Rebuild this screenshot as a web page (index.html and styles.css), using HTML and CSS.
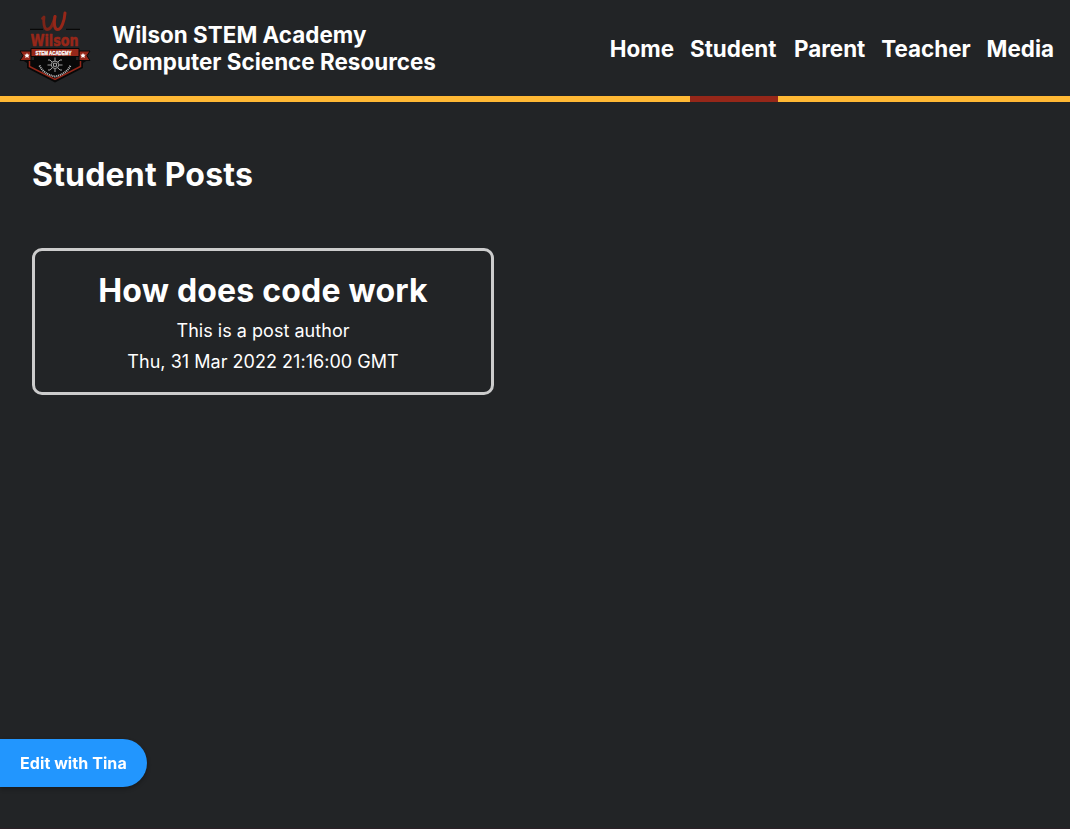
FILE: index.html
```
<!DOCTYPE html>
<html lang="en">
<head>
<meta charset="utf-8">
<title>Student Posts</title>
<link rel="stylesheet" href="styles.css">
</head>
<body>
<header class="header">
  <a class="brand">
    <svg class="logo" viewBox="15 5 80 80" aria-hidden="true">
      <path d="M30 29.300h13M66 29.300h14" stroke="#080808" stroke-width="1.200"/>
      <g fill="none" stroke-linecap="round" stroke-linejoin="round">
        <path d="M42.500 18.500l1.500-1.500c-.8 5 0 12 3 12.500 4 0 6-5 8-13" stroke="#7c2418" stroke-width="2.800"/>
        <path d="M55 16.500c-1.500 7-.5 13 2.500 13 4 0 7-9 7.500-16.500" stroke="#962719" stroke-width="3"/>
      </g>
      <text class="logo-name" x="30.500" y="45.500" textLength="48" lengthAdjust="spacingAndGlyphs">Wilson</text>
      <path d="M22 60h66l-5 3v5L55 82.500 27 68v-5z" fill="#080808"/>
      <path d="M29.500 60v6.500L55 79.500l25.500-13V60" fill="none" stroke="#962719" stroke-width="1.500"/>
      <path d="M20 51h11v9.500H20l3-4.800zM90 51H79v9.500h11l-3-4.800z" fill="#962719" stroke="#080808" stroke-width="1"/>
      <path d="M34 57h42v7L55 75.500 34 64z" fill="#080808"/>
      <path d="M31 48.500h48v8H31z" fill="#962719" stroke="#080808" stroke-width="1"/>
      <text class="logo-banner" x="35.500" y="54.700" textLength="36" lengthAdjust="spacingAndGlyphs">STEM ACADEMY</text>
      <path d="M27 53l.8 1.600 1.900.2-1.300 1.300.3 1.900-1.700-.9-1.700.9.3-1.900-1.300-1.300 1.900-.2zM83 53l.8 1.600 1.900.2-1.300 1.300.3 1.900-1.700-.9-1.700.9.3-1.900-1.300-1.300 1.900-.2z" fill="#fff"/>
      <g fill="none" stroke="#b0b0b0" stroke-width=".9">
        <circle cx="55" cy="64.800" r="3.700"/>
        <path d="M53.500 63.300h3v3h-3zM55 61v-3.500M55 69v3M51 65h-3.500M59 65h3.500M52 62l-2-2h-2M58 62l2-2h2M52 68l-2 2h-2M58 68l2 2h2"/>
      </g>
      <path d="M39.500 65.500c3 6 8 9.500 15.500 11 7.500-1.500 12.500-5 15.500-11" fill="none" stroke="#bbb" stroke-width="2" stroke-dasharray="1.100 .8"/>
    </svg>
    <span class="brand-text">Wilson STEM Academy<br>Computer Science Resources</span>
  </a>
  <nav class="nav">
    <a class="nav-link">Home</a>
    <a class="nav-link nav-link-active">Student</a>
    <a class="nav-link">Parent</a>
    <a class="nav-link">Teacher</a>
    <a class="nav-link">Media</a>
  </nav>
</header>
<main class="main">
  <h1 class="title">Student Posts</h1>
  <article class="card">
    <h2 class="card-title">How does code work</h2>
    <p class="card-line">This is a post author</p>
    <p class="card-line">Thu, 31 Mar 2022 21:16:00 GMT</p>
  </article>
</main>
<button class="edit">Edit with Tina</button>
</body>
</html>
```
FILE: styles.css
```
* { box-sizing: border-box; }
body {
  margin: 0;
  height: 829px;
  overflow: hidden;
  background: #222426;
  border-bottom: 1px solid #2a2026;
  color: #fff;
  font-family: Inter, sans-serif;
}
.header {
  display: flex;
  justify-content: space-between;
  height: 102px;
  padding: 0 16px 0 15px;
  background: linear-gradient(#ffb834, #ffb834) bottom / 100% 6px no-repeat;
}
.brand { display: flex; gap: 17px; padding-top: 5px; }
.logo { width: 80px; height: 80px; }
.brand-text { padding-top: 16px; font-size: 22.4px; font-weight: 700; line-height: 27px; letter-spacing: .03px; }
.logo-name { font: 700 15.5px "DejaVu Sans", sans-serif; fill: #962719; stroke: #962719; stroke-width: .6px; stroke-linejoin: round; }
.logo-banner { font: 700 6px "Liberation Sans", sans-serif; fill: #fff; stroke: #fff; stroke-width: .3px; }
.nav { display: flex; gap: 16px; }
.nav-link {
  border-bottom: 6px solid transparent;
  font-size: 22.4px;
  font-weight: 700;
  line-height: 98px;
  height: 102px;
}
.nav-link-active { width: 88px; border-color: #962719; }
.main { padding: 53px 32px 0; }
.title { margin: 0 0 53px; font-size: 32px; line-height: 40px; letter-spacing: .2px; }
.card {
  width: 462px;
  height: 147px;
  padding: 20px 16px 0;
  border: 3px solid #ccc;
  border-radius: 10px;
  text-align: center;
}
.card-title { margin: 0 0 4px; font-size: 32px; line-height: 40px; letter-spacing: .2px; }
.card-line { margin: 0; font-size: 18px; line-height: 31px; letter-spacing: .03px; }
.edit {
  position: fixed;
  left: 0;
  top: 739px;
  width: 147px;
  height: 48px;
  padding: 0 20px;
  border: 0;
  border-radius: 0 24px 24px 0;
  background: #2296fe;
  box-shadow: 0 2px 4px rgba(0, 0, 0, .3);
  color: #fff;
  font: 700 16px Inter, sans-serif;
  letter-spacing: .08px;
  text-align: left;
  white-space: nowrap;
}
```
